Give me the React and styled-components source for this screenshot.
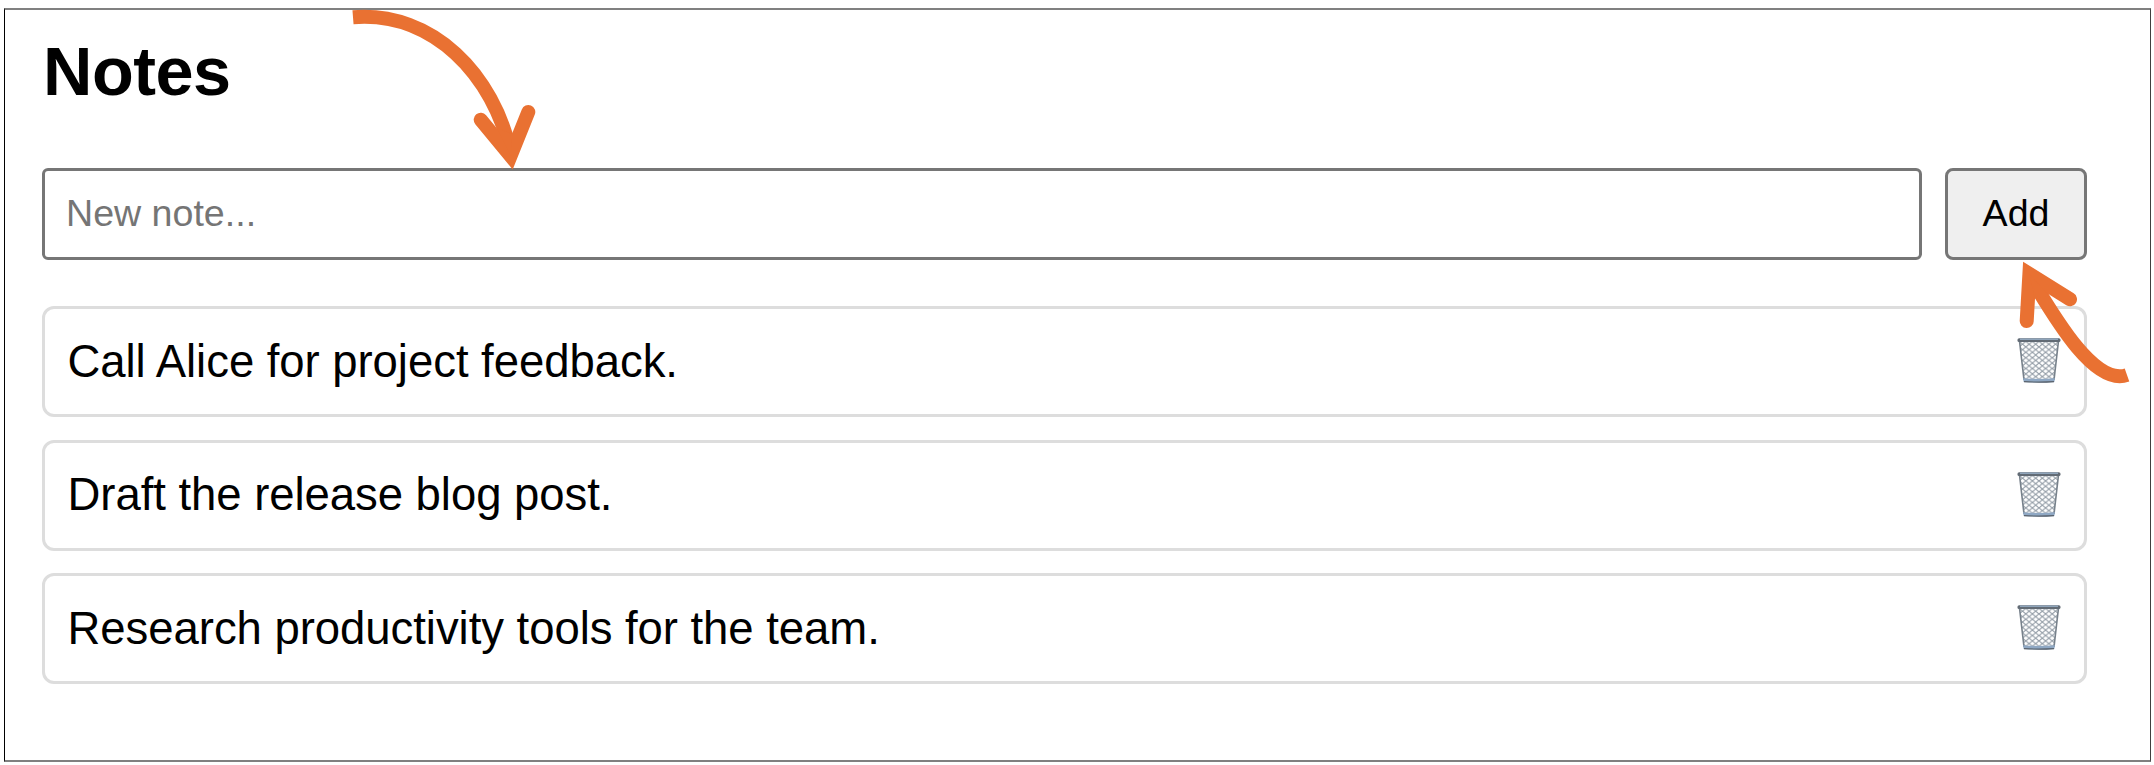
import React, { useState } from "react";
import styled, { createGlobalStyle } from "styled-components";

const GlobalStyle = createGlobalStyle`
  *, *::before, *::after { box-sizing: border-box; }
  body {
    margin: 0;
    background: #fff;
    color: #000;
    font-family: "Liberation Sans", Arial, Helvetica, sans-serif;
  }
`;

const Screen = styled.div`
  position: relative;
  height: 765px;
  padding: 8px 3px 3px 4px;
  overflow: hidden;
`;

const Frame = styled.main`
  height: 754px;
  border-style: solid;
  border-width: 2px 1px 2px 1px;
  border-color: #808080 #404040 #808080 #000;
  padding: 21px 63px 0 37px;
`;

const Title = styled.h1`
  margin: 0;
  height: 137px;
  padding-left: 1px;
  font-size: 68.4px;
  letter-spacing: -0.5px;
  line-height: 80px;
  font-weight: 700;
`;

const Form = styled.form`
  display: flex;
  gap: 23px;
  height: 92px;
  margin-bottom: 46px;
`;

const NoteInput = styled.input`
  flex: 1;
  min-width: 0;
  border: 3px solid #767676;
  border-radius: 6px;
  padding: 0 21px 2px;
  background: #fff;
  font: 37.6px "Liberation Sans", Arial, sans-serif;
  outline: none;
  &::placeholder { color: #757575; opacity: 1; }
`;

const AddButton = styled.button`
  width: 142px;
  border: 3px solid #767676;
  border-radius: 8px;
  padding: 0 0 2px;
  background: #efefef;
  color: #000;
  font: 37.6px "Liberation Sans", Arial, sans-serif;
`;

const List = styled.ul`
  display: flex;
  flex-direction: column;
  gap: 22.5px;
  margin: 0;
  padding: 0;
  list-style: none;
`;

const NoteRow = styled.li`
  display: flex;
  align-items: center;
  justify-content: space-between;
  height: 111px;
  border: 3px solid #ddd;
  border-radius: 12px;
  padding: 0 23px 0 22.5px;
`;

const NoteText = styled.span`
  font-size: 45.5px;
  letter-spacing: -0.05px;
  line-height: 54px;
`;

const DeleteButton = styled.button`
  display: flex;
  border: 0;
  padding: 0 0 3px;
  background: none;
`;

const Arrows = styled.svg`
  position: absolute;
  left: 0;
  top: 0;
  pointer-events: none;
`;

function Wastebasket() {
  return (
    <svg width="44" height="46" viewBox="0 0 44 46" fill="none">
      <defs>
        <pattern id="wire-mesh" width="6.6" height="5.4" x="2.2" y="4.5" patternUnits="userSpaceOnUse">
          <path d="M-1 -0.82L7.6 6.22M7.6 -0.82L-1 6.22" stroke="#929ca6" strokeWidth="1.1" />
        </pattern>
      </defs>
      <path d="M2.5 4L7 42H37L41.5 4Z" fill="url(#wire-mesh)" />
      <path d="M2.5 4L7 43M41.5 4L37 43" stroke="#77818b" strokeWidth="1.6" />
      <path d="M6 41.2Q22 42.6 38 41.2L37.3 45Q22 46 6.7 45Z" fill="#8fa8c4" />
      <path d="M7 44.6Q22 45.6 37 44.6" stroke="#59626c" strokeWidth="1.1" />
      <rect x="0.5" y="1.2" width="43" height="3.8" rx="1.6" fill="#626b75" />
      <path d="M3 2.2H41" stroke="#8fa5bb" strokeWidth="1.5" />
    </svg>
  );
}

const notes = [
  "Call Alice for project feedback.",
  "Draft the release blog post.",
  "Research productivity tools for the team.",
];

export default function App() {
  const [draft, setDraft] = useState("");
  return (
    <Screen>
      <GlobalStyle />
      <Frame>
        <Title>Notes</Title>
        <Form onSubmit={(e) => e.preventDefault()}>
          <NoteInput placeholder="New note..." value={draft} onChange={(e) => setDraft(e.target.value)} />
          <AddButton type="submit">Add</AddButton>
        </Form>
        <List>
          {notes.map((note) => (
            <NoteRow key={note}>
              <NoteText>{note}</NoteText>
              <DeleteButton type="button" aria-label="Delete note"><Wastebasket /></DeleteButton>
            </NoteRow>
          ))}
        </List>
      </Frame>
      <Arrows width="2154" height="765" fill="none" stroke="#e97132" strokeWidth="14">
        <path d="M353 17.3C433 11 494 75 511 154" />
        <path d="M480.7 119.7L510.6 155.9L528.3 112" fill="#e97132" fillOpacity="0" strokeLinecap="round" strokeMiterlimit="8" />
        <path d="M497 128L511 156L512.3 134Z" fill="#e97132" stroke="none" />
        <path d="M2032 280C2056 320 2095 386 2127 375" />
        <path d="M2026.7 321L2029.4 274L2070 299.3" strokeLinecap="round" strokeMiterlimit="8" />
        <path d="M2034.7 298.3L2029.4 274L2049 295.7Z" fill="#e97132" stroke="none" />
      </Arrows>
    </Screen>
  );
}
